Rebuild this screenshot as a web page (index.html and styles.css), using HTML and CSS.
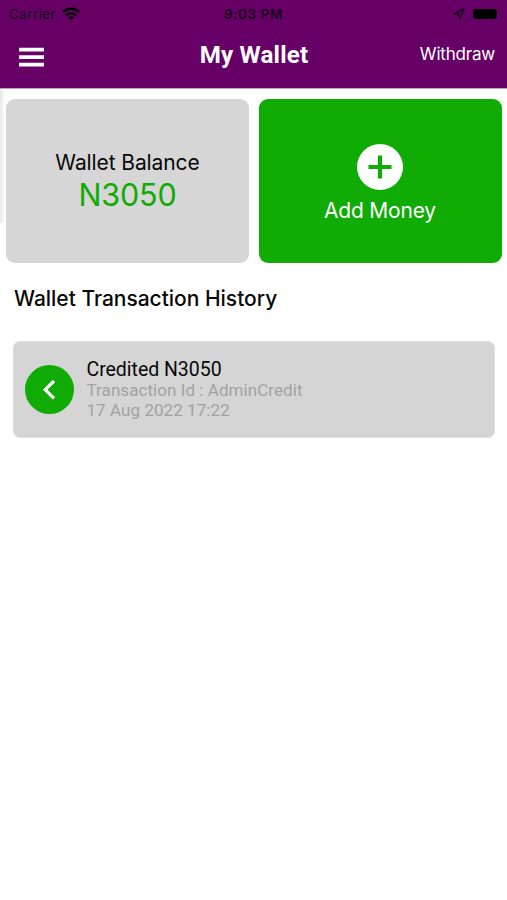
FILE: index.html
```html
<!DOCTYPE html>
<html lang="en">
<head>
<meta charset="utf-8">
<title>My Wallet</title>
<link rel="stylesheet" href="styles.css">
</head>
<body>
<header class="header">
  <div class="status">
    <div class="status-left">
      <span class="carrier">Carrier</span>
      <svg class="wifi" width="18" height="14" viewBox="0 0 18 14" fill="none" stroke="#000" stroke-width="2.4"><path d="M1 5Q9-2 17 5M4 8.3Q9 4 14 8.3"/><path d="M9 13.3L6.2 10.5Q9 8.2 11.8 10.5Z" fill="#000" stroke="none"/></svg>
    </div>
    <span class="time">9:03 PM</span>
    <div class="status-right">
      <svg width="12" height="12" viewBox="0 0 12 12" fill="none" stroke="#17001a" stroke-width="1.4" stroke-linejoin="round"><path d="M11 1L1 5.7L5.8 6.2L6.4 11Z"/></svg>
      <span class="battery"></span>
    </div>
  </div>
  <nav class="bar">
    <svg class="menu" width="25" height="20" viewBox="0 0 25 20" fill="#fff"><path d="M0 .8h25v3.8H0zM0 8.2h25v3.8H0zM0 15.7h25v3.8H0z"/></svg>
    <h1 class="title">My Wallet</h1>
    <span class="withdraw">Withdraw</span>
  </nav>
</header>
<main>
  <section class="cards">
    <div class="card balance">
      <span class="label">Wallet Balance</span>
      <span class="amount">N3050</span>
    </div>
    <div class="card add">
      <svg width="46" height="46" viewBox="0 0 46 46"><circle cx="23" cy="23" r="23" fill="#fff"/><path d="M11.5 23h23M23 11.5v23" stroke="#10ab04" stroke-width="4.2"/></svg>
      <span class="add-label">Add Money</span>
    </div>
  </section>
  <h2 class="history">Wallet Transaction History</h2>
  <article class="transaction">
    <svg width="49" height="49" viewBox="0 0 49 49"><circle cx="24.5" cy="24.5" r="24.5" fill="#10ab04"/><path d="M29 16L20.2 24.7L29 33.4" fill="none" stroke="#fff" stroke-width="3.2"/></svg>
    <div class="details">
      <span class="name">Credited N3050</span>
      <span class="meta id">Transaction Id : AdminCredit</span>
      <span class="meta date">17 Aug 2022 17:22</span>
    </div>
  </article>
</main>
</body>
</html>
```

FILE: styles.css
```css
* { box-sizing: border-box; }
body { margin: 0; background: #fff; color: #080808; font-family: Inter, sans-serif; }
h1, h2 { margin: 0; }
svg { display: block; flex: none; }
span, h1, h2 { white-space: nowrap; }
.header { height: 89px; background: #660066; border-bottom: 1px solid #c79bc7; }
.status { display: grid; grid-template-columns: 1fr auto 1fr; align-items: center; height: 27px; padding: 0 10px 0 10px; color: #17001a; font-size: 13.5px; line-height: 28px; }
.status-left, .status-right { display: flex; align-items: center; }
.status-left { gap: 6px; margin-left: -1px; }
.carrier { letter-spacing: .4px; }
.wifi { margin-top: -1px; }
.time { font-weight: 600; letter-spacing: .6px; }
.status-right { justify-content: flex-end; gap: 8px; }
.battery { width: 24px; height: 10px; border-radius: 3px; background: #000; }
.bar { display: grid; grid-template-columns: 1fr auto 1fr; align-items: center; height: 56px; padding: 0 12px 0 19px; color: #fff; }
.menu { margin-top: 4px; }
.title { margin-left: -6px; font: 700 24.2px/56px Roboto, sans-serif; letter-spacing: .15px; }
.withdraw { justify-self: end; font: 400 17px/52px Inter, sans-serif; letter-spacing: -.2px; margin-bottom: 2px; }
.cards { display: grid; grid-template-columns: 1fr 1fr; gap: 10px; padding: 9.5px 5px 0 6px; background: linear-gradient(90deg, #e8e8e8, #fff) no-repeat 0 0 / 5px 134px; }
.card { display: flex; flex-direction: column; align-items: center; height: 164px; border-radius: 9px; }
.balance { padding-top: 48.5px; background: #d6d6d6; }
.label { font-size: 21px; line-height: 32px; letter-spacing: -.1px; }
.amount { color: #10ab04; font-size: 30.5px; line-height: 31px; letter-spacing: -.2px; }
.add { padding: 45.5px 1px 0 0; background: #10ab04; color: #fff; }
.add-label { font-size: 21px; line-height: 41px; letter-spacing: -.2px; }
.history { padding: 20.5px 14px 0; font-size: 21px; font-weight: 500; line-height: 32px; letter-spacing: -.02px; }
.transaction { display: flex; align-items: center; gap: 12.5px; height: 97px; margin: 26px 12px 0 13px; padding: 0 0 0 11px; border-radius: 7px; background: #d5d5d5; border: 1px solid #dedede; }
.details { display: flex; flex-direction: column; font-family: Roboto, sans-serif; }
.name { font-size: 19.5px; line-height: 23px; letter-spacing: -.03px; }
.meta { color: #a2a2a2; font-size: 17px; line-height: 20px; letter-spacing: .06px; }
.id { line-height: 19px; }
.date { line-height: 21px; }
```
